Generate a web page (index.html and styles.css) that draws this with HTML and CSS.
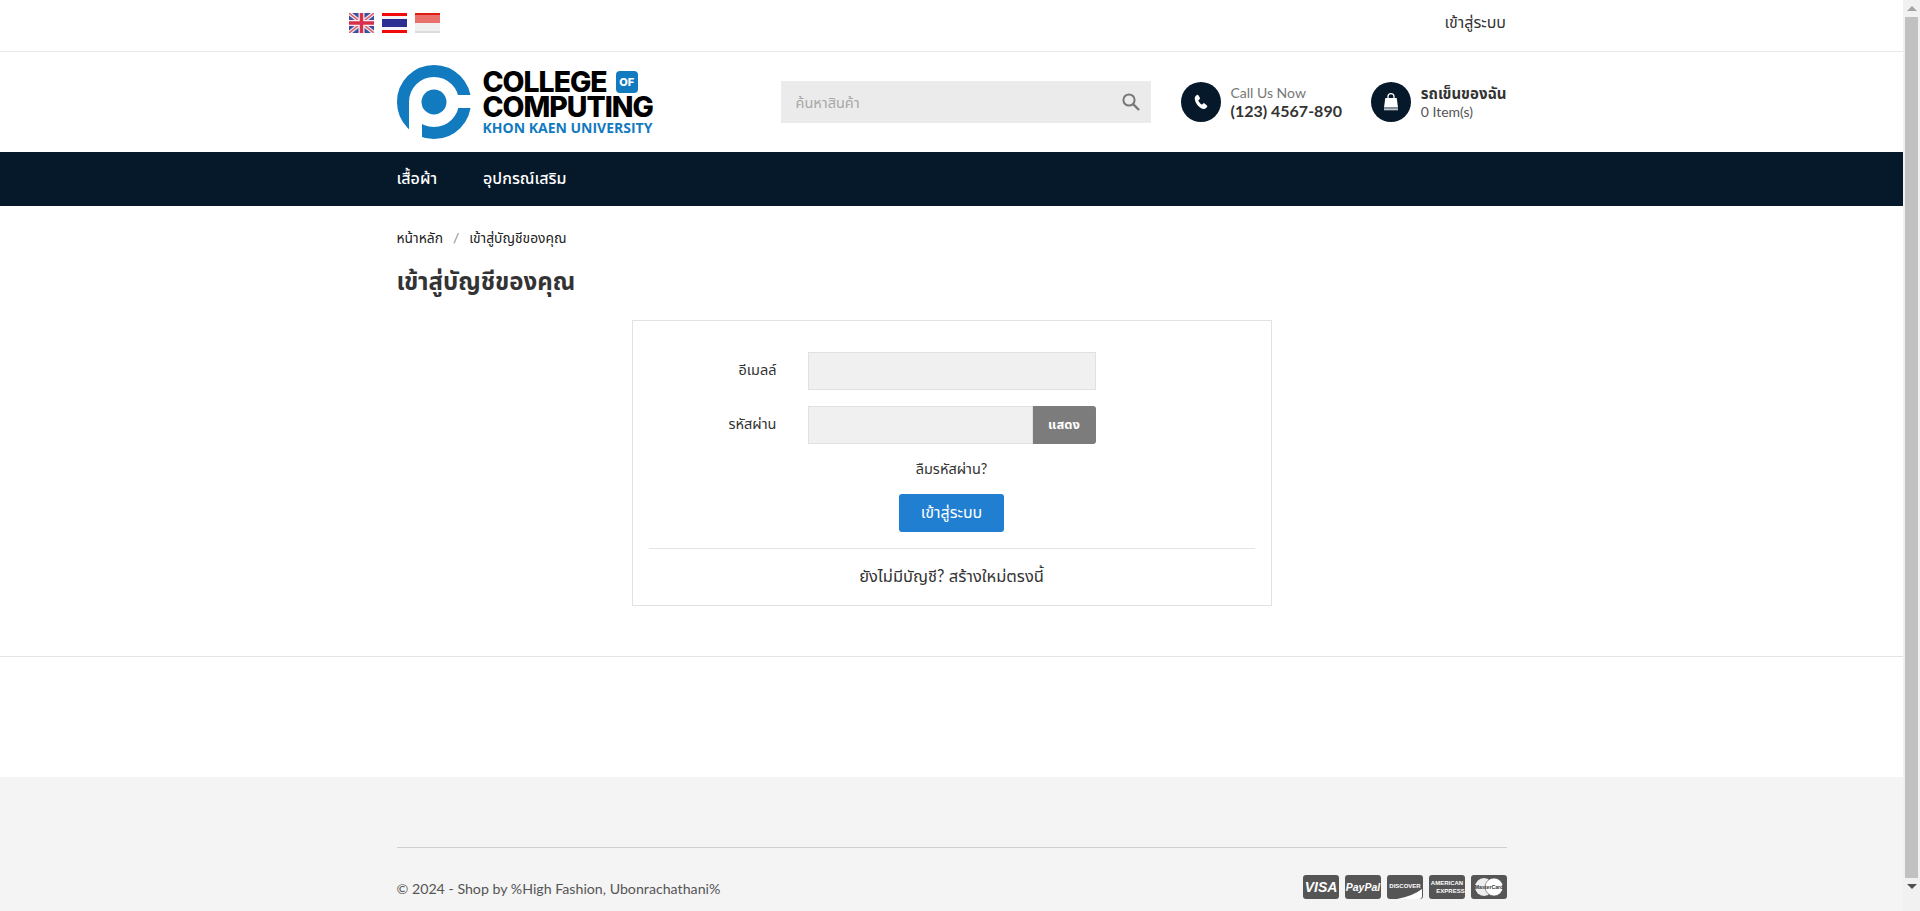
FILE: index.html
```html
<!DOCTYPE html>
<html lang="th">
<head>
    <meta charset="UTF-8">
    <meta name="viewport" content="width=device-width, initial-scale=1.0">
    <title>เข้าสู่บัญชีของคุณ</title>
    <link rel="stylesheet" href="styles.css">
</head>
<body>
    <div class="page">
        <div class="topbar">
            <div class="flags">
                <svg class="flag" viewBox="0 0 25 20">
                    <rect width="25" height="20" fill="#3d4f9c"/>
                    <path d="M0 0L25 20M25 0L0 20" stroke="#f2e6ea" stroke-width="4"/>
                    <path d="M0 0L25 20M25 0L0 20" stroke="#d9606f" stroke-width="1.4"/>
                    <path d="M12.5 0V20M0 10H25" stroke="#f6eef0" stroke-width="6"/>
                    <path d="M12.5 0V20M0 10H25" stroke="#d8304a" stroke-width="3.4"/>
                </svg>
                <svg class="flag" viewBox="0 0 25 20">
                    <rect width="25" height="20" fill="#f00a0a"/>
                    <rect y="3" width="25" height="14" fill="#f4f4fa"/>
                    <rect y="6" width="25" height="8" fill="#2c2f92"/>
                </svg>
                <svg class="flag" viewBox="0 0 25 20">
                    <rect width="25" height="20" fill="#f0f0f0"/>
                    <rect width="25" height="10" fill="#e9706b"/>
                    <rect width="25" height="2" fill="#e01a14"/>
                    <rect y="18" width="25" height="2" fill="#dcdcdc"/>
                </svg>
            </div>
            <a class="top-login" href="#">เข้าสู่ระบบ</a>
        </div>

        <header class="header container">
            <a class="logo" href="#">
                <svg class="logo-mark" viewBox="0 0 74 74">
                    <circle cx="37" cy="37" r="31" fill="none" stroke="#127abf" stroke-width="12"/>
                    <rect x="12" y="37" width="13" height="37" fill="#fff"/>
                    <rect x="37" y="30" width="37" height="13" fill="#fff"/>
                    <circle cx="37" cy="37" r="12.5" fill="#127abf"/>
                </svg>
                <span class="logo-text">
                    <span class="logo-line">COLLEGE <span class="logo-of">OF</span></span>
                    <span class="logo-line">COMPUTING</span>
                    <span class="logo-sub">KHON KAEN UNIVERSITY</span>
                </span>
            </a>
            <form class="search">
                <input class="search-input" type="text" placeholder="ค้นหาสินค้า">
                <svg class="search-icon" viewBox="0 0 18 18">
                    <circle cx="7" cy="7" r="5.6" fill="none" stroke="#777" stroke-width="2"/>
                    <path d="M11 11L17 17" stroke="#777" stroke-width="2.4"/>
                </svg>
            </form>
            <div class="info">
                <span class="info-icon">
                    <svg viewBox="0 0 24 24" width="18" height="18">
                        <path fill="#fff" d="M6.6 2.5c.7-.4 1.500-.2 1.900.5l2 3.400c.4.700.2 1.400-.4 1.900L8.600 9.500c-.2.200-.3.500-.1.800.9 1.900 2.400 3.700 4.200 5 .3.200.6.200.8 0l1.400-1.200c.6-.5 1.400-.5 2 0l3 2.400c.6.500.7 1.300.3 1.900-1 1.600-2.500 3.100-4.300 3-3.200-.3-6.400-2.400-8.700-5.500C4.900 12.800 3.500 9.500 3.700 6.500 3.800 4.800 5.200 3.300 6.600 2.500z"/>
                    </svg>
                </span>
                <span class="info-text">
                    <span class="info-label">Call Us Now</span>
                    <strong class="info-phone">(123) 4567-890</strong>
                </span>
            </div>
            <a class="info cart" href="#">
                <span class="info-icon">
                    <svg viewBox="0 0 20 20" width="20" height="20">
                        <path fill="none" stroke="#fff" stroke-width="1.300" d="M7 7V4.500C7 2.800 8.300 1.600 10 1.600s3 1.200 3 2.900V7"/>
                        <path fill="#fff" d="M4.300 6h11.400l1.300 9.500H3z"/>
                        <rect x="3" y="16.300" width="14" height="2" fill="#fff" opacity=".75"/>
                    </svg>
                </span>
                <span class="info-text">
                    <strong class="cart-title">รถเข็นของฉัน</strong>
                    <span class="cart-count">0 Item(s)</span>
                </span>
            </a>
        </header>

        <nav class="nav">
            <div class="container nav-list">
                <a href="#">เสื้อผ้า</a>
                <a href="#">อุปกรณ์เสริม</a>
            </div>
        </nav>

        <main class="main">
            <div class="container">
                <div class="breadcrumb">
                    <a href="#">หน้าหลัก</a>
                    <span class="crumb-sep">/</span>
                    <span>เข้าสู่บัญชีของคุณ</span>
                </div>
                <h1 class="page-title">เข้าสู่บัญชีของคุณ</h1>

                <div class="login-card">
                    <form class="login-form">
                        <div class="form-row">
                            <label for="email">อีเมลล์</label>
                            <input id="email" class="field" type="text">
                        </div>
                        <div class="form-row">
                            <label for="password">รหัสผ่าน</label>
                            <div class="field-group">
                                <input id="password" class="field" type="password">
                                <button class="btn-show" type="button">แสดง</button>
                            </div>
                        </div>
                        <a class="forgot" href="#">ลืมรหัสผ่าน?</a>
                        <button class="btn-login" type="button">เข้าสู่ระบบ</button>
                    </form>
                    <div class="register"><a href="#">ยังไม่มีบัญชี? สร้างใหม่ตรงนี้</a></div>
                </div>
            </div>
        </main>

        <footer class="footer">
            <div class="container">
                <div class="footer-row">
                    <span class="copyright">© 2024 - Shop by %High Fashion, Ubonrachathani%</span>
                    <div class="payments">
                        <svg class="pay" viewBox="0 0 36 24">
                            <rect width="36" height="24" rx="3" fill="#555"/>
                            <text x="18" y="17" class="pay-visa">VISA</text>
                        </svg>
                        <svg class="pay" viewBox="0 0 36 24">
                            <rect width="36" height="24" rx="3" fill="#555"/>
                            <text x="18" y="15.500" class="pay-paypal">PayPal</text>
                        </svg>
                        <svg class="pay" viewBox="0 0 36 24">
                            <rect width="36" height="24" rx="3" fill="#555"/>
                            <path d="M10 24Q26 21 35 14V21a3 3 0 0 1-3 3z" fill="#fff"/>
                            <text x="18" y="12.500" class="pay-small">DISCOVER</text>
                        </svg>
                        <svg class="pay" viewBox="0 0 36 24">
                            <rect width="36" height="24" rx="3" fill="#555"/>
                            <text x="18" y="10" class="pay-small">AMERICAN</text>
                            <text x="21.500" y="18" class="pay-small">EXPRESS</text>
                        </svg>
                        <svg class="pay" viewBox="0 0 36 24">
                            <rect width="36" height="24" rx="3" fill="#555"/>
                            <circle cx="13" cy="12" r="9" fill="#eee"/>
                            <circle cx="23" cy="12" r="9" fill="#fff"/>
                            <circle cx="23" cy="12" r="9" fill="none" stroke="#555" stroke-width=".6"/>
                            <text x="18" y="14" class="pay-mc">MasterCard</text>
                        </svg>
                    </div>
                </div>
            </div>
        </footer>
    </div>

    <div class="scrollbar">
        <span class="arrow-up"></span>
        <span class="thumb"></span>
        <span class="arrow-down"></span>
    </div>
</body>
</html>
```

FILE: styles.css
```css
* {
    box-sizing: border-box;
}
html, body {
    height: 100%;
    margin: 0;
    overflow: hidden;
}
body {
    display: flex;
    font-family: 'Lato', 'Noto Sans Thai', Tahoma, sans-serif;
    font-size: 14px;
    color: #333;
    background: #fff;
}
a {
    color: inherit;
    text-decoration: none;
}
.page {
    flex: 1;
    min-width: 0;
    height: 100%;
    overflow: hidden;
}
.container {
    width: 1110px;
    margin: 0 auto;
}

/* top bar */
.topbar {
    display: flex;
    justify-content: space-between;
    align-items: center;
    height: 52px;
    padding: 0 397px 6px 349px;
    border-bottom: 1px solid #e8e8e8;
}
.flags {
    display: flex;
    gap: 8px;
}
.flag {
    display: block;
    width: 25px;
    height: 20px;
    filter: blur(.6px);
}
.top-login {
    font-size: 16px;
}

/* header */
.header {
    display: flex;
    align-items: center;
    height: 100px;
}
.logo {
    display: flex;
    align-items: center;
    gap: 12px;
    width: 384px;
    flex: none;
}
.logo-mark {
    display: block;
    width: 74px;
    height: 74px;
}
.logo-text {
    display: flex;
    flex-direction: column;
    font-family: 'Inter', 'Liberation Sans', sans-serif;
    font-weight: 800;
    color: #000;
}
.logo-line {
    display: flex;
    align-items: center;
    gap: 9px;
    height: 25px;
    font-size: 28.400px;
    letter-spacing: -1px;
    line-height: 25px;
}
.logo-of {
    display: inline-block;
    width: 22px;
    height: 22px;
    border-radius: 4px;
    background: #127abf;
    color: #fff;
    font-size: 11px;
    letter-spacing: 0;
    line-height: 22px;
    text-align: center;
}
.logo-sub {
    margin-top: 1px;
    font-family: 'Open Sans', sans-serif;
    font-size: 14px;
    font-weight: 700;
    line-height: 15px;
    color: #127abf;
}
.search {
    display: flex;
    align-items: center;
    width: 370px;
    height: 42px;
    padding: 0 11px 0 15px;
    background: #ebebeb;
    flex: none;
}
.search-input {
    flex: 1;
    min-width: 0;
    padding: 0;
    border: none;
    background: none;
    font: inherit;
    font-size: 14.500px;
    outline: none;
}
.search-input::placeholder {
    color: #a8a8a8;
}
.search-icon {
    width: 18px;
    height: 18px;
}
.info {
    display: flex;
    align-items: center;
    gap: 10px;
    margin-left: 30px;
}
.cart {
    margin-left: auto;
}
.info-icon {
    display: flex;
    justify-content: center;
    align-items: center;
    width: 40px;
    height: 40px;
    border-radius: 50%;
    background: #06192a;
}
.info-text {
    display: flex;
    flex-direction: column;
}
.info-label {
    font-size: 14px;
    line-height: 17px;
    color: #777;
}
.info-phone {
    font-size: 16px;
    font-weight: 700;
    line-height: 20px;
}
.cart-title {
    font-size: 15px;
    line-height: 20px;
}
.cart-count {
    font-size: 14px;
    line-height: 18px;
    color: #555;
}

/* nav */
.nav {
    height: 54px;
    background: #06192a;
}
.nav-list {
    display: flex;
    align-items: center;
    gap: 46px;
    height: 100%;
    color: #fff;
    font-size: 16px;
    font-weight: 500;
}

/* main */
.main {
    height: 451px;
    border-bottom: 1px solid #e4e4e4;
}
.breadcrumb {
    display: flex;
    gap: 10px;
    padding-top: 23px;
    font-size: 13.800px;
    line-height: 18px;
    color: #222;
}
.crumb-sep {
    color: #888;
}
.page-title {
    margin: 19px 0 0;
    font-size: 24px;
    font-weight: 700;
    line-height: 30px;
}
.login-card {
    width: 640px;
    height: 286px;
    margin: 24px auto 0;
    padding: 31px 16px 0;
    border: 1px solid #e2e2e2;
}
.login-form {
    display: flex;
    flex-direction: column;
    align-items: center;
    height: 197px;
    border-bottom: 1px solid #e4e4e4;
}
.form-row {
    display: flex;
    align-items: center;
    width: 100%;
    height: 38px;
    margin-bottom: 16px;
}
.form-row label {
    width: 128px;
    margin-right: 31px;
    font-size: 14.500px;
    text-align: right;
}
.field-group {
    display: flex;
    width: 288px;
}
.field {
    width: 288px;
    height: 38px;
    border: 1px solid #e1e1e1;
    background: #f0f0f0;
    outline: none;
}
.field-group .field {
    flex: 1;
    width: auto;
    min-width: 0;
}
.btn-show {
    width: 63px;
    height: 38px;
    padding: 0;
    border: none;
    border-radius: 0 3px 3px 0;
    background: #7c7c7c;
    color: #fff;
    font: inherit;
    font-size: 13px;
    font-weight: 700;
}
.forgot {
    margin-top: -1px;
    font-size: 14.500px;
    line-height: 20px;
}
.btn-login {
    width: 105px;
    height: 38px;
    margin-top: 15px;
    padding: 0;
    border: none;
    border-radius: 3px;
    background: #217fd2;
    color: #fff;
    font: inherit;
    font-size: 16px;
}
.register {
    padding-top: 14px;
    font-size: 16.500px;
    line-height: 26px;
    text-align: center;
}

/* footer */
.footer {
    margin-top: 120px;
    padding-top: 70px;
    height: 151px;
    background: #f4f4f4;
}
.footer-row {
    display: flex;
    justify-content: space-between;
    padding-top: 27px;
    border-top: 1px solid #cfcfcf;
}
.copyright {
    font-size: 14.200px;
    line-height: 28px;
    color: #555;
}
.payments {
    display: flex;
    gap: 6px;
}
.pay {
    display: block;
    width: 36px;
    height: 24px;
}
.pay text {
    fill: #fff;
    text-anchor: middle;
    font-family: 'Liberation Sans', sans-serif;
}
.pay-visa {
    font-size: 14px;
    font-weight: 700;
    font-style: italic;
}
.pay-paypal {
    font-size: 10.500px;
    font-weight: 700;
    font-style: italic;
}
.pay-small {
    font-size: 6px;
    font-weight: 700;
}
.pay .pay-mc {
    fill: #333;
    font-size: 5.200px;
    font-weight: 700;
}

/* scrollbar */
.scrollbar {
    display: flex;
    flex-direction: column;
    align-items: center;
    flex: none;
    width: 17px;
    height: 100%;
    background: #f1f1f1;
}
.thumb {
    width: 13px;
    height: 861px;
    background: #c1c1c1;
}
.arrow-up, .arrow-down {
    width: 0;
    height: 0;
    margin: 6px 0;
    border-left: 5px solid transparent;
    border-right: 5px solid transparent;
}
.arrow-up {
    border-bottom: 5px solid #a3a3a3;
}
.arrow-down {
    border-top: 5px solid #505050;
}
```
